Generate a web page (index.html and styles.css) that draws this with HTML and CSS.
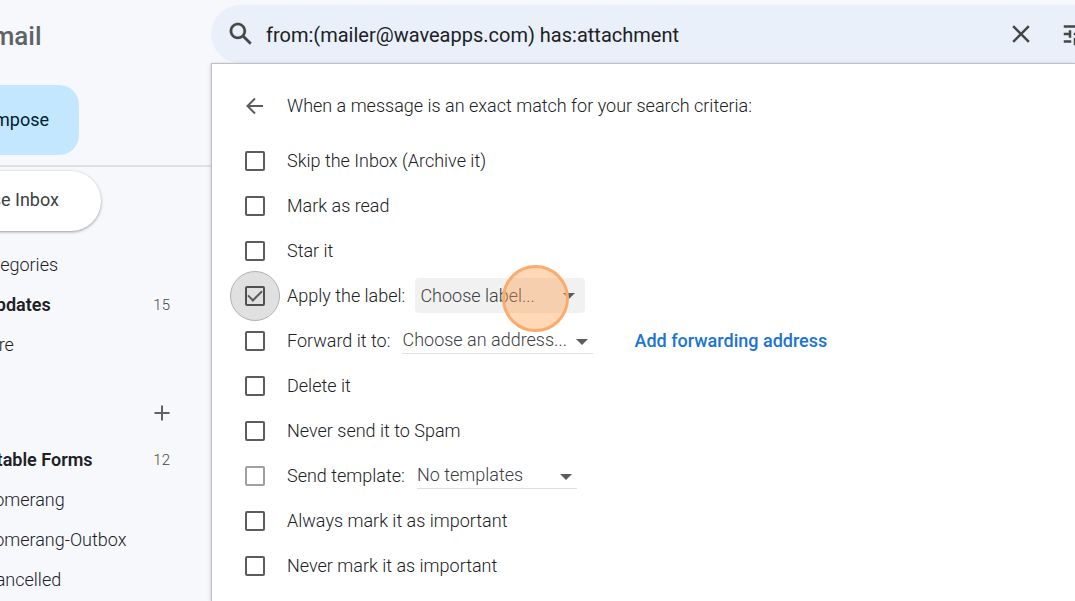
FILE: index.html
```
<!DOCTYPE html>
<html lang="en">
<head>
    <meta charset="UTF-8">
    <meta name="viewport" content="width=device-width, initial-scale=1.0">
    <title>Gmail</title>
    <link rel="stylesheet" href="styles.css">
</head>
<body>
    <div class="app">
        <aside class="sidebar">
            <div class="sidebar-top">
                <div class="logo">Gmail</div>
                <button type="button" class="compose-btn">Compose</button>
            </div>
            <button type="button" class="pause-btn">Pause Inbox</button>
            <nav class="nav">
                <a href="#" class="nav-item">Categories</a>
                <a href="#" class="nav-item nav-sub unread">Updates <span class="count">15</span></a>
                <a href="#" class="nav-item">More</a>
            </nav>
            <div class="labels-header">
                <button type="button" class="icon-btn" aria-label="Create new label">
                    <svg width="16" height="16" viewBox="0 0 16 16"><path d="M8 0.500v15M0.500 8h15" stroke="#5f6368" stroke-width="2" fill="none"/></svg>
                </button>
            </div>
            <nav class="nav">
                <a href="#" class="nav-item unread">Airtable Forms <span class="count">12</span></a>
                <a href="#" class="nav-item">Boomerang</a>
                <a href="#" class="nav-item">Boomerang-Outbox</a>
                <a href="#" class="nav-item nav-sub">Cancelled</a>
            </nav>
        </aside>

        <main class="main">
            <form class="search-bar">
                <button type="button" class="icon-btn" aria-label="Search">
                    <svg width="30" height="30" viewBox="0 0 24 24" fill="#444746" stroke="#444746" stroke-width="0.200"><path d="M20.490 19l-5.730-5.730C15.530 12.200 16 10.910 16 9.500 16 5.910 13.090 3 9.500 3S3 5.910 3 9.500 5.910 16 9.500 16c1.410 0 2.700-.470 3.770-1.240L19 20.490 20.490 19zM5 9.500C5 7.010 7.010 5 9.500 5S14 7.010 14 9.500 11.990 14 9.500 14 5 11.990 5 9.500z"/></svg>
                </button>
                <input type="text" class="search-input" aria-label="Search mail" value="from:(mailer@waveapps.com) has:attachment">
                <button type="button" class="icon-btn" aria-label="Clear search">
                    <svg width="30" height="30" viewBox="0 0 24 24" fill="#444746"><path d="M19 6.410L17.590 5 12 10.590 6.410 5 5 6.410 10.590 12 5 17.590 6.410 19 12 13.410 17.590 19 19 17.590 13.410 12z"/></svg>
                </button>
                <button type="button" class="icon-btn" aria-label="Show search options">
                    <svg width="30" height="30" viewBox="0 0 24 24" fill="#444746"><path d="M3 17v2h6v-2H3zM3 5v2h10V5H3zm10 16v-2h8v-2h-8v-2h-2v6h2zM7 9v2H3v2h4v2h2V9H7zm14 4v-2H11v2h10zm-6-4h2V7h4V5h-4V3h-2v6z"/></svg>
                </button>
            </form>

            <section class="filter-panel">
                <div class="filter-title">
                    <button type="button" class="icon-btn" aria-label="Back">
                        <svg width="20" height="20" viewBox="0 0 20 20"><path d="M18 10H3M10 2.500L2.500 10l7.500 7.500" stroke="#5c5c5c" stroke-width="2" fill="none"/></svg>
                    </button>
                    <span>When a message is an exact match for your search criteria:</span>
                </div>
                <div class="filter-row">
                    <input type="checkbox" id="archive">
                    <label for="archive">Skip the Inbox (Archive it)</label>
                </div>
                <div class="filter-row">
                    <input type="checkbox" id="read">
                    <label for="read">Mark as read</label>
                </div>
                <div class="filter-row">
                    <input type="checkbox" id="star">
                    <label for="star">Star it</label>
                </div>
                <div class="filter-row focused">
                    <input type="checkbox" id="apply" checked>
                    <label for="apply">Apply the label:</label>
                    <div class="dropdown dropdown-label">
                        <select aria-label="Label"><option>Choose label...</option></select>
                        <span class="click-marker"></span>
                    </div>
                </div>
                <div class="filter-row">
                    <input type="checkbox" id="forward">
                    <label for="forward">Forward it to:</label>
                    <div class="dropdown dropdown-address">
                        <select aria-label="Forwarding address"><option>Choose an address...</option></select>
                    </div>
                    <a href="#" class="forward-link">Add forwarding address</a>
                </div>
                <div class="filter-row">
                    <input type="checkbox" id="delete">
                    <label for="delete">Delete it</label>
                </div>
                <div class="filter-row">
                    <input type="checkbox" id="spam">
                    <label for="spam">Never send it to Spam</label>
                </div>
                <div class="filter-row">
                    <input type="checkbox" id="template" disabled>
                    <label for="template">Send template:</label>
                    <div class="dropdown dropdown-template">
                        <select aria-label="Template"><option>No templates</option></select>
                    </div>
                </div>
                <div class="filter-row">
                    <input type="checkbox" id="important">
                    <label for="important">Always mark it as important</label>
                </div>
                <div class="filter-row">
                    <input type="checkbox" id="unimportant">
                    <label for="unimportant">Never mark it as important</label>
                </div>
            </section>
        </main>
    </div>
</body>
</html>
```

FILE: styles.css
```
* {
    box-sizing: border-box;
}

body {
    margin: 0;
    background-color: #f6f8fc;
    color: #202124;
    font-family: Roboto, Arial, sans-serif;
    font-size: 18px;
    font-weight: 300;
    line-height: 24px;
    overflow: hidden;
}

button, input, select {
    font: inherit;
    color: inherit;
}

button {
    border: none;
    background: none;
    padding: 0;
    cursor: pointer;
}

svg {
    display: block;
}

.icon-btn {
    flex: none;
}

.app {
    display: flex;
    min-height: 100vh;
}

/* the left edge of the sidebar runs off screen */
.sidebar {
    flex: none;
    width: 271px;
    margin-left: -60px;
}

.sidebar-top {
    height: 167px;
    padding-top: 20px;
    border-bottom: 2px solid #dfe1e5;
}

.logo {
    padding-left: 34px;
    color: #5f6368;
    font-size: 26px;
    font-weight: 500;
    line-height: 32px;
}

.compose-btn {
    display: block;
    width: 139px;
    height: 70px;
    margin-top: 33px;
    padding-right: 30px;
    border-radius: 20px;
    background-color: #c2e7ff;
    color: #001d35;
    font-weight: 400;
    text-align: right;
}

.pause-btn {
    display: block;
    width: 161px;
    height: 60px;
    margin: 4px 0 14px;
    padding: 0 42px 2px 0;
    border-radius: 30px;
    background-color: #fff;
    box-shadow: 0 1px 3px rgba(60,64,67,0.5);
    color: #3c4043;
    font-weight: 400;
    text-align: right;
}

.nav-item {
    display: flex;
    align-items: center;
    justify-content: space-between;
    height: 40px;
    padding: 0 41px 0 33px;
    color: #202124;
    text-decoration: none;
}

.nav-sub {
    padding-left: 44px;
}

.unread {
    font-weight: 600;
}

.count {
    color: #444746;
    font-size: 15px;
    font-weight: 300;
}

.labels-header {
    display: flex;
    justify-content: flex-end;
    align-items: center;
    height: 75px;
    padding: 20px 41px 0 0;
}

.main {
    flex: 1;
    display: flex;
    flex-direction: column;
    min-width: 0;
    padding-top: 5px;
}

.search-bar {
    display: flex;
    align-items: center;
    height: 58px;
    margin-right: -30px;
    padding-left: 15px;
    border-radius: 29px 0 0 29px;
    background-color: #e9f0fa;
}

.search-input {
    flex: 1;
    min-width: 0;
    margin: 0 24px 0 10px;
    padding: 2px 0 0;
    border: none;
    outline: none;
    background: none;
    font-size: 20px;
    font-weight: 400;
}

.search-bar .icon-btn:last-child {
    margin: 0 15px 0 24px;
}

.filter-panel {
    flex: 1;
    padding: 22px 0 12px 33px;
    border: 1px solid #bdc1c6;
    border-width: 1px 0 0 1px;
    background-color: #fff;
    box-shadow: 0 1px 4px rgba(0,0,0,0.2);
}

.filter-title {
    display: flex;
    align-items: center;
    gap: 22px;
    height: 40px;
    margin-bottom: 12px;
}

.filter-row {
    display: flex;
    align-items: center;
    height: 45px;
}

.filter-row input {
    appearance: none;
    position: relative;
    flex: none;
    display: grid;
    place-items: center;
    width: 20px;
    height: 20px;
    margin: 0 22px 0 0;
    border: 2px solid #5c5c5c;
    border-radius: 2px;
}

.filter-row input:disabled {
    border-color: #a0a0a0;
}

.filter-row input:checked::after {
    content: "";
    width: 12px;
    height: 6px;
    margin-bottom: 4px;
    border: solid #5c5c5c;
    border-width: 0 0 2px 2px;
    transform: rotate(-45deg);
}

.focused input::before {
    content: "";
    position: absolute;
    inset: -17px;
    border: 1px solid #b0b0b0;
    border-radius: 50%;
    background-color: rgba(0,0,0,0.12);
}

.dropdown {
    position: relative;
    height: 26px;
    margin-left: 12px;
    border-bottom: 1px solid #e0e0e0;
    color: #3c4043;
}

.dropdown select {
    appearance: none;
    display: block;
    width: 100%;
    height: 100%;
    padding: 0;
    border: none;
    outline: none;
    background: none;
}

.dropdown::after {
    content: "";
    position: absolute;
    top: 11px;
    right: 5px;
    border: solid transparent;
    border-width: 6px 6px 0;
    border-top-color: #5c5c5c;
    pointer-events: none;
}

.dropdown-label {
    width: 170px;
    height: 35px;
    margin-left: 10px;
    padding-left: 5px;
    border-bottom: none;
    border-radius: 4px;
    background-color: #f1f1f1;
}

.dropdown-label::after {
    top: 15px;
    right: 10px;
}

.dropdown-address {
    width: 191px;
}

.dropdown-template {
    width: 160px;
}

.forward-link {
    margin-left: 41px;
    color: #1a73d8;
    font-weight: 500;
    text-decoration: none;
}

/* highlight ring over the spot that was clicked */
.click-marker {
    position: absolute;
    z-index: 1;
    top: -13px;
    left: 87px;
    width: 67px;
    height: 67px;
    border: 3px solid #fbab6a;
    border-radius: 50%;
    background-color: rgba(255,158,78,0.4);
    pointer-events: none;
}
```
